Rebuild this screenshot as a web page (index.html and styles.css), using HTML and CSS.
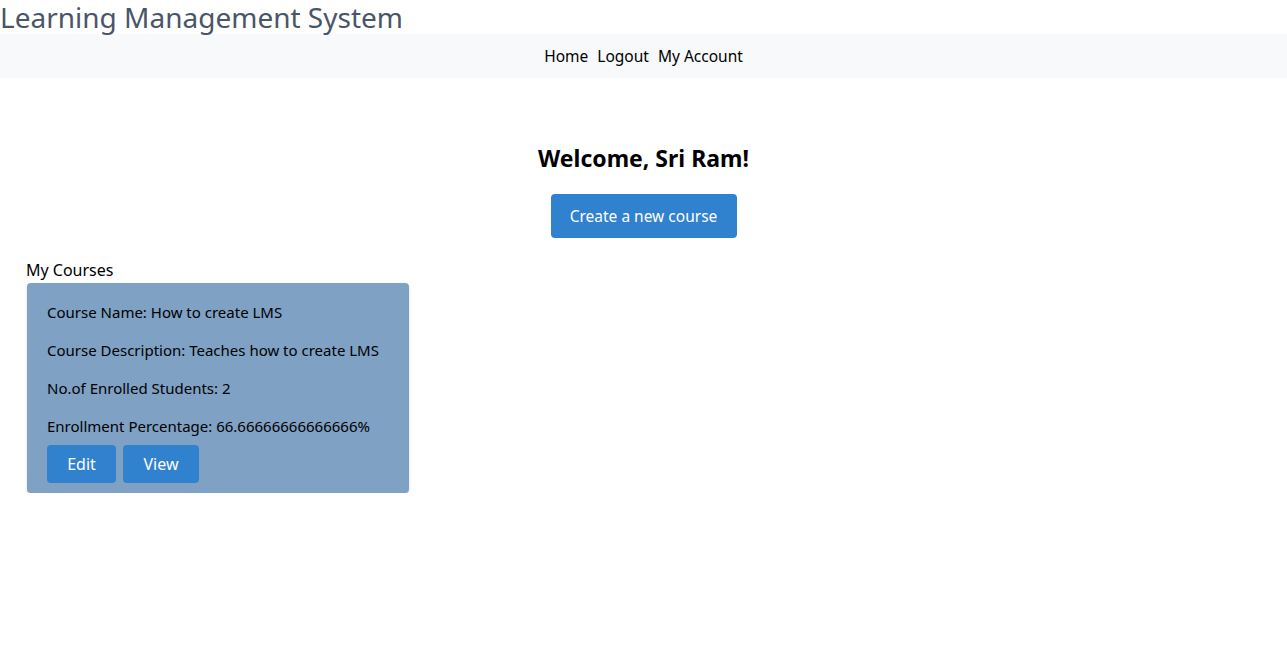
FILE: index.html
```html
<!DOCTYPE html>
<html>
<head>
<meta charset="utf-8">
<link rel="stylesheet" href="styles.css">
</head>
<body>
<header class="site-title">Learning Management System</header>
<nav class="navbar">
  <a class="nav-link" href="#">Home</a>
  <a class="nav-link" href="#">Logout</a>
  <a class="nav-link" href="#">My Account</a>
</nav>
<main class="main">
  <section class="hero">
    <h2 class="welcome">Welcome, Sri Ram!</h2>
    <button class="btn btn-create">Create a new course</button>
  </section>
  <section class="courses">
    <div class="courses-title">My Courses</div>
    <div class="course-card">
      <p class="course-line">Course Name: How to create LMS</p>
      <p class="course-line">Course Description: Teaches how to create LMS</p>
      <p class="course-line">No.of Enrolled Students: 2</p>
      <p class="course-line">Enrollment Percentage: 66.66666666666666%</p>
      <div class="card-actions">
        <button class="btn btn-small btn-edit">Edit</button>
        <button class="btn btn-small btn-view">View</button>
      </div>
    </div>
  </section>
</main>
</body>
</html>
```

FILE: styles.css
```css
* { box-sizing: border-box; }
html, body {
  margin: 0;
  padding: 0;
  background: #ffffff;
  font-family: "Noto Sans", "Open Sans", "Liberation Sans", sans-serif;
  color: #000000;
}
.site-title {
  font-size: 28px;
  line-height: 34px;
  color: #4a5568;
  height: 34px;
  white-space: nowrap;
}
.navbar {
  background: #f8f9fa;
  height: 44px;
  display: flex;
  justify-content: center;
  align-items: center;
  gap: 9px;
}
.nav-link {
  color: #000;
  text-decoration: none;
  font-size: 15.5px;
}
.main {
  display: flex;
  flex-direction: column;
}
.hero {
  display: flex;
  flex-direction: column;
  align-items: center;
  padding-top: 64px;
}
.welcome {
  margin: 0;
  font-size: 23px;
  line-height: 32px;
  font-weight: 700;
}
.btn {
  border: none;
  background: #3182ce;
  color: #ffffff;
  font-family: inherit;
  font-size: 16px;
  border-radius: 4px;
  cursor: pointer;
}
.btn-create {
  margin-top: 20px;
  height: 44px;
  width: 186px;
  font-size: 15.5px;
}
.courses {
  padding: 22px 0 0 26px;
}
.courses-title {
  font-size: 16px;
  line-height: 20px;
}
.course-card {
  margin-top: 3px;
  margin-left: 1px;
  width: 382px;
  background: #7fa1c4;
  border-radius: 4px;
  box-shadow: 0 1px 3px rgba(0,0,0,0.15);
  padding: 17px 20px 10px 20px;
}
.course-line {
  margin: 0 0 14px 0;
  font-size: 15px;
  line-height: 24px;
  white-space: nowrap;
}
.course-line:nth-of-type(4) { margin-bottom: 7px; }
.card-actions {
  display: flex;
  gap: 7px;
}
.btn-small {
  height: 38px;
}
.btn-edit { width: 69px; }
.btn-view { width: 76px; }
```
